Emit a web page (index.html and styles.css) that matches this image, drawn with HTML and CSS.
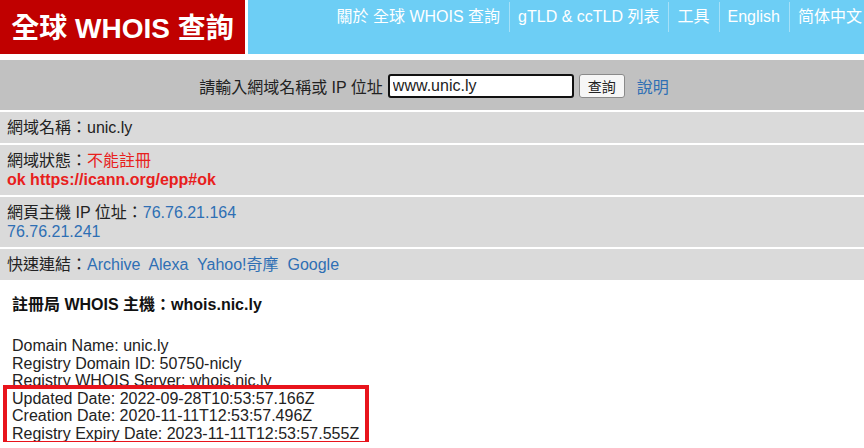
FILE: index.html
```html
<!DOCTYPE html>
<html lang="zh-Hant">
<head>
<meta charset="utf-8">
<title>全球 WHOIS 查詢</title>
<link rel="stylesheet" href="styles.css">
</head>
<body>
<header class="top">
  <div class="brand">全球 WHOIS 查詢</div>
  <nav class="nav">
    <a class="nav-item">關於 全球 WHOIS 查詢</a>
    <a class="nav-item">gTLD &amp; ccTLD 列表</a>
    <a class="nav-item">工具</a>
    <a class="nav-item">English</a>
    <a class="nav-item">简体中文</a>
  </nav>
</header>
<form class="search">
  <label class="search-label">請輸入網域名稱或 IP 位址</label>
  <input class="search-input" type="text" value="www.unic.ly">
  <button class="search-btn" type="button">查詢</button>
  <a class="link help">說明</a>
</form>
<section class="rows">
  <div class="row">網域名稱：unic.ly</div>
  <div class="row">網域狀態：<span class="red">不能註冊</span><br><b class="red">ok https://icann.org/epp#ok</b></div>
  <div class="row">網頁主機 IP 位址：<a class="link">76.76.21.164</a><br><a class="link">76.76.21.241</a></div>
  <div class="row">快速連結：<a class="link">Archive</a>&nbsp; <a class="link">Alexa</a>&nbsp; <a class="link">Yahoo!奇摩</a>&nbsp; <a class="link">Google</a></div>
</section>
<section class="whois">
  <h3 class="whois-title">註冊局 WHOIS 主機：whois.nic.ly</h3>
  <div class="whois-body">
    <div>Domain Name: unic.ly</div>
    <div>Registry Domain ID: 50750-nicly</div>
    <div>Registry WHOIS Server: whois.nic.ly</div>
    <div>Updated Date: 2022-09-28T10:53:57.166Z</div>
    <div>Creation Date: 2020-11-11T12:53:57.496Z</div>
    <div>Registry Expiry Date: 2023-11-11T12:53:57.555Z</div>
    <div class="highlight"></div>
  </div>
</section>
</body>
</html>
```
FILE: styles.css
```css
html, body { margin: 0; padding: 0; background: #fff; }
body {
  font-family: "Liberation Sans", Arial, "Noto Sans CJK TC", sans-serif;
  font-size: 16px;
  color: #222;
  width: 864px;
  overflow: hidden;
}
a { text-decoration: none; cursor: pointer; }

.top { display: flex; height: 54px; gap: 3px; }
.brand {
  width: 245px;
  background: #c00000;
  color: #fff;
  font-weight: bold;
  font-size: 28px;
  display: flex;
  align-items: center;
  justify-content: center;
  padding-bottom: 2px;
  box-sizing: border-box;
}
.nav {
  flex: 1;
  background: #6dcef5;
  display: flex;
  justify-content: flex-end;
  align-items: flex-start;
  padding-top: 2px;
  box-sizing: border-box;
}
.nav-item {
  color: #fff;
  font-size: 16px;
  line-height: 30px;
  padding: 0 9px 0 8px;
  border-left: 1px solid #a5e0f8;
}
.nav-item:first-child { border-left: none; }
.nav-item:last-child { padding-right: 2px; }

.search {
  margin-top: 6px;
  height: 50px;
  background: #c1c1c1;
  display: flex;
  align-items: center;
  justify-content: center;
  gap: 5px;
  padding-left: 4px;
  padding-top: 1px;
  box-sizing: border-box;
}
.search-label { color: #222; }
.search-input {
  width: 186px;
  height: 24px;
  box-sizing: border-box;
  border: 2px solid #111;
  border-radius: 3px;
  font: 16px "Liberation Sans", Arial, sans-serif;
  padding: 0 3px;
  color: #222;
  background: #fff;
}
.search-btn {
  height: 24px;
  width: 46px;
  font: 14px "Liberation Sans", "Noto Sans CJK TC", sans-serif;
  background: #f6f6f6;
  border: 1px solid #8a8a8a;
  border-radius: 3px;
  color: #222;
  padding: 0;
}
.help { margin-left: 7px; }
.link { color: #2e6fb4; }
.red { color: #e8201c; }

.rows { display: flex; flex-direction: column; gap: 2px; margin-top: 2px; }
.row {
  background: #dadada;
  padding: 6px 7px;
  line-height: 19px;
}

.whois { padding: 0 12px; }
.whois-title {
  font-size: 16px;
  font-weight: bold;
  margin: 16px 0 0;
  line-height: 18px;
  color: #111;
}
.whois-body {
  position: relative;
  margin-top: 23px;
  line-height: 17.5px;
  color: #222;
}
.highlight {
  position: absolute;
  left: -9px;
  top: 48px;
  width: 358px;
  height: 52px;
  border: 4px solid #e8141c;
}
```
